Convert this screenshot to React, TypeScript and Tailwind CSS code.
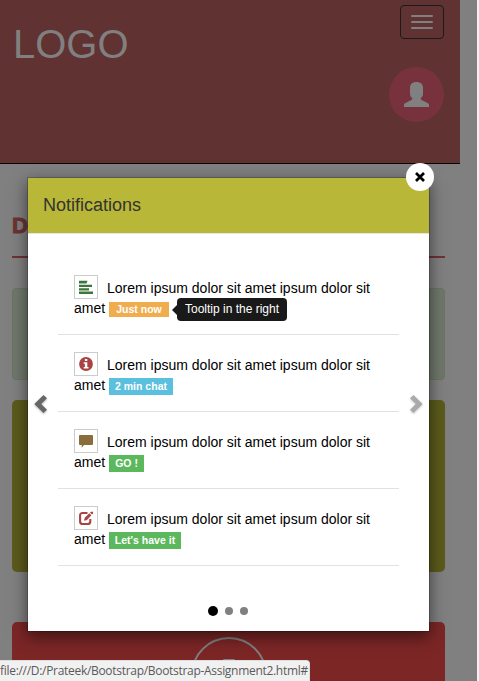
import React from 'react';

type Note = { icon: React.ReactNode; label: string; badge: string; tip?: boolean };

const AlignLeft = () => (
  <svg viewBox="0 0 14 14" className="h-[14px] w-[14px] fill-[#3c763d]">
    <path d="M0 .8h8.500L7.500 3.500H0zM0 4.800h13v2.300H0zM0 8.200h10v2.300H0zM0 11.600h14V14H0z" />
  </svg>
);
const Info = () => (
  <svg viewBox="0 0 14 14" className="h-[14px] w-[14px]">
    <circle cx="7" cy="7" r="6.9" fill="#a94442" />
    <path d="M5.900 2h2.400v2H5.900zM4.700 5.200h3.600v4.700h1.200v1.600H4.700V9.900h1.200V6.800H4.700z" fill="#fff" />
  </svg>
);
const Comment = () => (
  <svg viewBox="0 0 14 14" className="h-[14px] w-[14px] fill-[#8a6d3b]">
    <path d="M1 1h12a1 1 0 0 1 1 1v8a1 1 0 0 1-1 1H5L2.700 13.700V11H1a1 1 0 0 1-1-1V2a1 1 0 0 1 1-1z" />
  </svg>
);
const Edit = () => (
  <svg viewBox="0 0 14 14" className="h-[14px] w-[14px]">
    <path d="M8.500 2H3.600Q1.100 2 1.100 4.500v6q0 2.500 2.500 2.500h5.200q2.500 0 2.500-2.500V8" fill="none" stroke="#a94442" strokeWidth="2.100" />
    <path d="M5 9.700 5.700 6.700 10.300 2.200l2.100 2.100L8 8.900zM11 1.500l.9-.8H14v2.100l-.9.800z" fill="#a94442" />
  </svg>
);

const notes: Note[] = [
  { icon: <AlignLeft />, label: 'Just now', badge: 'mt-[4px] h-[15px] w-[60px] leading-[15px] bg-[#f0ad4e]', tip: true },
  { icon: <Info />, label: '2 min chat', badge: 'mt-[3px] h-[17px] w-[64px] leading-[17px] bg-[#5bc0de]' },
  { icon: <Comment />, label: 'GO !', badge: 'mt-[3px] h-[17px] w-[35px] leading-[17px] bg-[#5cb85c]' },
  { icon: <Edit />, label: "Let's have it", badge: 'mt-[3px] h-[17px] w-[72px] leading-[17px] bg-[#5cb85c]' },
];

function Header() {
  return (
    <header className="flex h-[164px] w-[460px] justify-between border-b border-black bg-[#613232] pl-[13px] pr-4">
      <div className="pt-[20px] text-[40px] leading-[48px] text-[#808080]">LOGO</div>
      <div className="flex flex-col items-end pt-[5px]">
        <button className="flex h-[34px] w-11 flex-col items-center justify-center gap-1 rounded border border-[#1b1b1b]">
          <span className="h-[2px] w-[22px] rounded-[1px] bg-[#808080]" />
          <span className="h-[2px] w-[22px] rounded-[1px] bg-[#808080]" />
          <span className="h-[2px] w-[22px] rounded-[1px] bg-[#808080]" />
        </button>
        <div className="mt-7 flex h-[55px] w-[55px] items-center justify-center rounded-full bg-[#78323e]">
          <svg viewBox="0 0 25 25" className="h-[25px] w-[25px] fill-[#808080]">
            <path d="M12.500 0C8.300 0 6 2.300 6 5.800v5.400c0 2.500.8 3.700 2.200 4.700v.9c0 .6-.4.900-.9 1.100L1.500 21C.500 21.500 0 22 0 23v2h25v-2c0-1-.5-1.500-1.500-2l-6-3.100c-.5-.2-.7-.5-.7-1.100v-.9c1.400-1 2.200-2.200 2.200-4.700V5.800C19 2.300 16.700 0 12.500 0z" />
          </svg>
        </div>
      </div>
    </header>
  );
}

function Modal() {
  return (
    <div className="absolute left-[27px] top-[177px] flex h-[455px] w-[403px] flex-col border border-black/20 bg-white bg-clip-padding shadow-[0_5px_15px_rgba(0,0,0,0.5)]">
      <div className="h-14 border-b border-[#e5e5e5] bg-[#b8b737] pl-[15px] pt-[14px] text-[18px] leading-[26px] text-[#333]">
        Notifications
      </div>
      <div className="mx-[30px] mt-6 flex flex-col">
        {notes.map((n) => (
          <div key={n.label} className="h-[77px] border-b border-[#e1e1e1] px-4 pt-[17px] text-[14px] text-black">
            <div className="flex h-6">
              <span className="flex h-6 w-6 shrink-0 items-center justify-center border border-[#ccc]">{n.icon}</span>
              <span className="ml-[9px] whitespace-nowrap pt-px leading-6">Lorem ipsum dolor sit amet ipsum dolor sit</span>
            </div>
            <div className="-mt-px flex h-5 leading-5">
              <span className="w-[35px]">amet</span>
              <span className={'shrink-0 whitespace-nowrap text-center text-[10.5px] font-bold text-white ' + n.badge}>{n.label}</span>
              {n.tip && (
                <span className="flex h-[23px] shrink-0 items-center pl-[3px]">
                  <svg viewBox="0 0 5 10" className="h-[10px] w-[5px] fill-[#191919]">
                    <path d="M5 0v10L0 5z" />
                  </svg>
                  <span className="h-[23px] w-[110px] whitespace-nowrap rounded bg-[#191919] text-center text-[12px] leading-[22px] text-white">
                    Tooltip in the right
                  </span>
                </span>
              )}
            </div>
          </div>
        ))}
      </div>
      <div className="mt-10 flex items-center justify-center pr-[1px]">
        <span className="h-[10px] w-[10px] rounded-full bg-black" />
        <span className="ml-[7px] h-2 w-2 rounded-full bg-[#808080]" />
        <span className="ml-[7px] h-2 w-2 rounded-full bg-[#808080]" />
      </div>
      <svg viewBox="0 0 14 20" className="absolute left-[6px] top-[216px] h-5 w-[14px] fill-[#666] drop-shadow-[0_1px_1px_rgba(0,0,0,0.3)]">
        <path d="M9.500 1 13 4.200 7.200 10 13 15.800 9.500 19 .3 10z" />
      </svg>
      <svg viewBox="0 0 14 20" className="absolute right-[6px] top-[216px] h-5 w-[14px] fill-[#aaa] drop-shadow-[0_1px_1px_rgba(0,0,0,0.2)]">
        <path d="M4.500 1 1 4.200 6.800 10 1 15.800 4.500 19 13.700 10z" />
      </svg>
      <button className="absolute -right-[5px] -top-[15px] flex h-7 w-7 items-center justify-center rounded-full bg-white">
        <svg viewBox="0 0 10 10" className="h-[10px] w-[10px] stroke-black" strokeWidth="2.700">
          <path d="M1 1l8 8M9 1L1 9" />
        </svg>
      </button>
    </div>
  );
}

export default function App() {
  return (
    <div className="relative h-[681px] w-[479px] overflow-hidden border-r-2 border-[#f1f1f1] bg-[#808080] font-['Liberation_Sans',Arial,sans-serif]">
      <Header />
      <main className="ml-3 w-[433px]">
        <h2 className="h-[94px] border-b-2 border-[#6e3333] pt-[48px] text-[22px] font-black leading-[28px] text-[#6e3333] [-webkit-text-stroke:1px_#6e3333]">D</h2>
        <div className="mt-[30px] h-[92px] rounded border border-[#6b7563] bg-[#70786c]" />
        <div className="mt-5 h-[172px] rounded-[5px] bg-[#5c5b1c]" />
        <div className="mt-[50px] flex h-[100px] justify-center rounded-[5px] bg-[#7c2626] pt-[15px]">
          <div className="flex h-[76px] w-[76px] justify-center rounded-full border-2 border-[#808080] pt-5">
            <span className="h-6 w-3 rounded-[1px] bg-[#808080]" />
          </div>
        </div>
      </main>
      <Modal />
      <div className="absolute bottom-0 left-0 h-[21px] w-[310px] whitespace-nowrap rounded-tr border-r border-t border-[#ddd] bg-[#f1f1f1] font-['Open_Sans','Noto_Sans',sans-serif] text-[12px] leading-5 tracking-[-0.3px] text-[#5a5a5a]">
        file:///D:/Prateek/Bootstrap/Bootstrap-Assignment2.html#
      </div>
    </div>
  );
}
